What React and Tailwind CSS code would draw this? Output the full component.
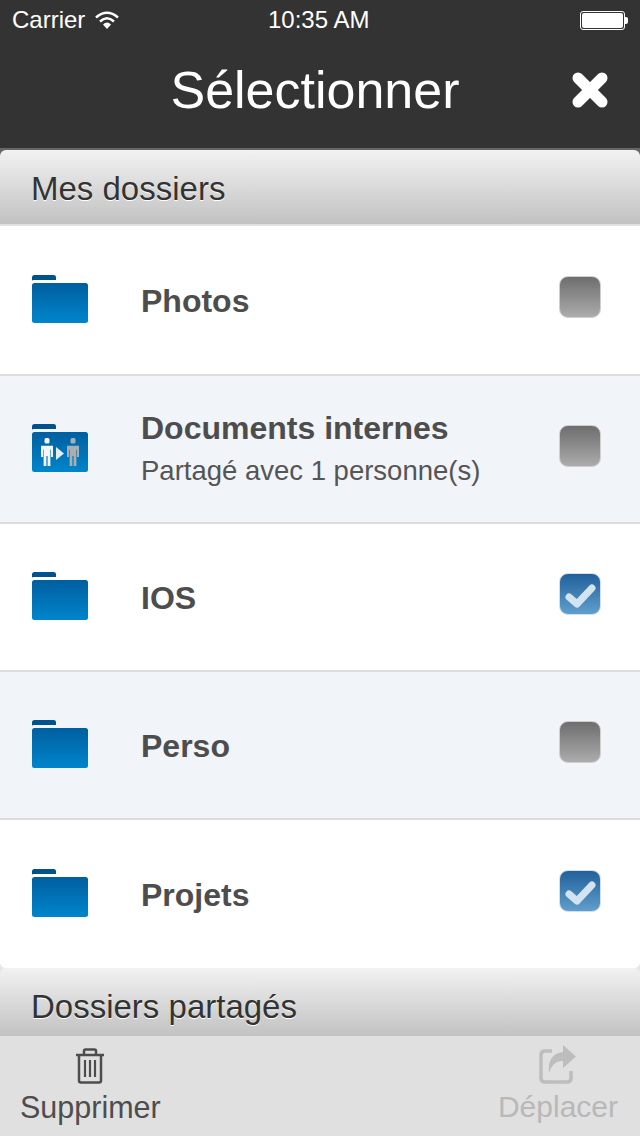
import React from 'react';

const rows = [
  { name: 'Photos', h: 'h-[150px]', bg: 'bg-white' },
  { name: 'Documents internes', sub: 'Partagé avec 1 personne(s)', h: 'h-[148px]', bg: 'bg-[#f1f4f9]', shared: true },
  { name: 'IOS', h: 'h-[148px]', bg: 'bg-white', checked: true },
  { name: 'Perso', h: 'h-[148px]', bg: 'bg-[#f1f4f9]' },
  { name: 'Projets', h: 'h-[148px]', bg: 'bg-white', checked: true, last: true },
];

function Person({ x, fill }) {
  return (
    <g fill={fill} transform={`translate(${x} 15) scale(1 1.12)`}>
      <rect x="4.5" y="0" width="5" height="5" rx="1.5" />
      <path d="M1 7h12v10h-2V10.5h-.6V25H7.6v-9H6.4v9H3.6V10.5H3V17H1z" />
    </g>
  );
}

function Folder({ shared }) {
  return (
    <svg width="58" height="50" viewBox="0 0 58 50" className="shrink-0 mb-[2px]">
      <defs>
        <linearGradient id={shared ? 'fs' : 'fp'} x1="0" y1="0" x2="0" y2="1">
          <stop offset="0" stopColor="#005f9f" />
          <stop offset="1" stopColor="#0085cc" />
        </linearGradient>
      </defs>
      <path d="M1 3.5Q1 1 3.5 1h19Q25 1 25 3v3H2.5Q1 7 1 5.5z" fill="#00528c" />
      <rect x="1" y="9" width="56" height="40" rx="2.5" fill={`url(#${shared ? 'fs' : 'fp'})`} />
      {shared && (
        <g>
          <Person x={9} fill="#f2f6f8" />
          <path d="M25 24l8 6.5-8 6.5z" fill="#e6eef3" />
          <Person x={35} fill="#a9aeb0" />
        </g>
      )}
    </svg>
  );
}

function Checkbox({ checked }) {
  if (checked) {
    return (
      <div className="relative mb-[6px] w-[42px] h-[42px] rounded-[9px] border border-[#d5dde6] bg-gradient-to-b from-[#21609a] to-[#5f9fcd]">
        <svg width="40" height="40" viewBox="0 0 40 40" className="absolute left-0 top-0">
          <path d="M9 23l8 7L32 14" fill="none" stroke="#d3e3ef" strokeWidth="7" strokeLinecap="round" strokeLinejoin="round" />
        </svg>
      </div>
    );
  }
  return <div className="mb-[6px] w-[42px] h-[42px] rounded-[9px] border border-[#cfcfcf] bg-gradient-to-b from-[#6e6e6e] to-[#acacac]" />;
}

function SectionHeader({ title, className }) {
  return (
    <div className={`${className} shrink-0 flex items-center pl-[31px] rounded-t-[6px] bg-gradient-to-b from-[#f2f2f2] to-[#c2c2c2]`}>
      <span className="text-[33px] leading-none text-[#333333] [text-shadow:0_1px_0_#ffffff]">{title}</span>
    </div>
  );
}

export default function App() {
  return (
    <div className="w-[640px] h-[1136px] flex flex-col overflow-hidden bg-[#e6e6e6] font-['Liberation_Sans',Arial,sans-serif]">
      {/* Status bar + title */}
      <header className="h-[150px] shrink-0 flex flex-col bg-[#333333] border-b-2 border-[#666666]">
        <div className="h-[40px] flex items-center justify-between pl-[12px] pr-[12px] text-white">
          <div className="flex items-center gap-[10px]">
            <span className="text-[24px] leading-none">Carrier</span>
            <svg width="24" height="20" viewBox="0 0 24 20">
              <path d="M1 7.5Q12-2 23 7.5" fill="none" stroke="#fff" strokeWidth="2.4" />
              <path d="M5 11.5Q12 5 19 11.5" fill="none" stroke="#fff" strokeWidth="2.4" />
              <path d="M8 14.5Q12 10.5 16 14.5L12 19z" fill="#fff" />
            </svg>
          </div>
          <span className="absolute left-[268px] text-[24px] leading-none">10:35 AM</span>
          <div className="flex items-center">
            <div className="w-[45px] h-[19px] rounded-[3px] border border-white p-[1px]">
              <div className="w-full h-full bg-white rounded-[2px]" />
            </div>
            <div className="w-[3px] h-[7px] bg-white rounded-r-[2px]" />
          </div>
        </div>
        <div className="relative flex-1 flex items-center justify-center pb-[8px] pr-[10px]">
          <h1 className="text-[52px] leading-none text-white">Sélectionner</h1>
          <svg width="36" height="36" viewBox="0 0 36 36" className="absolute left-[572px] top-[32px]">
            <path d="M6 6L30 30M30 6L6 30" stroke="#fff" strokeWidth="11" strokeLinecap="round" />
          </svg>
        </div>
      </header>

      <div className="shrink-0 bg-[#666666]">
        <SectionHeader title="Mes dossiers" className="h-[74px] pt-[3px]" />
      </div>

      <div className="shrink-0 rounded-b-[6px] overflow-hidden border-t-2 border-[#e0e0e0] bg-white">
        {rows.map((row) => (
          <div key={row.name} className={`${row.h} ${row.bg} ${row.last ? '' : 'border-b-2 border-[#dcdcdc]'} flex items-center pl-[31px] pr-[39px]`}>
            <Folder shared={row.shared} />
            <div className={`flex-1 pl-[52px] ${row.sub ? 'mb-[2px]' : 'mt-[1px]'}`}>
              <div className="text-[32px] leading-none font-bold text-[#4d4d4d]">{row.name}</div>
              {row.sub && <div className="mt-[13px] text-[27.5px] leading-none text-[#555555]">{row.sub}</div>}
            </div>
            <Checkbox checked={row.checked} />
          </div>
        ))}
      </div>

      <SectionHeader title="Dossiers partagés" className="h-[68px] pt-[8px]" />

      {/* Bottom toolbar */}
      <footer className="h-[100px] shrink-0 flex items-start justify-between pl-[20px] pr-[22px] pt-[12px] bg-[#e0e0e0]">
        <div className="flex flex-col items-center">
          <svg width="32" height="36" viewBox="0 0 32 36" fill="none" stroke="#4d4d4d">
            <path d="M2 7h28" strokeWidth="2.5" />
            <path d="M10 6V3q0-1.5 1.5-1.5h9Q22 1.5 22 3v3" strokeWidth="2.5" />
            <path d="M5 8v24.5q0 2 2 2h18q2 0 2-2V8" strokeWidth="2.5" />
            <path d="M11 12v17M16 12v17M21 12v17" strokeWidth="2.2" />
          </svg>
          <span className="mt-[8px] text-[30.5px] leading-none text-[#4d4d4d]">Supprimer</span>
        </div>
        <div className="flex flex-col items-center -mt-[3px]">
          <svg width="38" height="39" viewBox="0 0 38 39">
            <path d="M13 6H6Q2 6 2 10v23q0 4 4 4h22q4 0 4-4v-7" fill="none" stroke="#bdbdbd" strokeWidth="3.5" />
            <path d="M24 0l13 11.5L24 23v-7q-10-1-14 12Q8 9 24 7z" fill="#bdbdbd" />
          </svg>
          <span className="mt-[8px] text-[30px] leading-none text-[#b8b8b8]">Déplacer</span>
        </div>
      </footer>
    </div>
  );
}
